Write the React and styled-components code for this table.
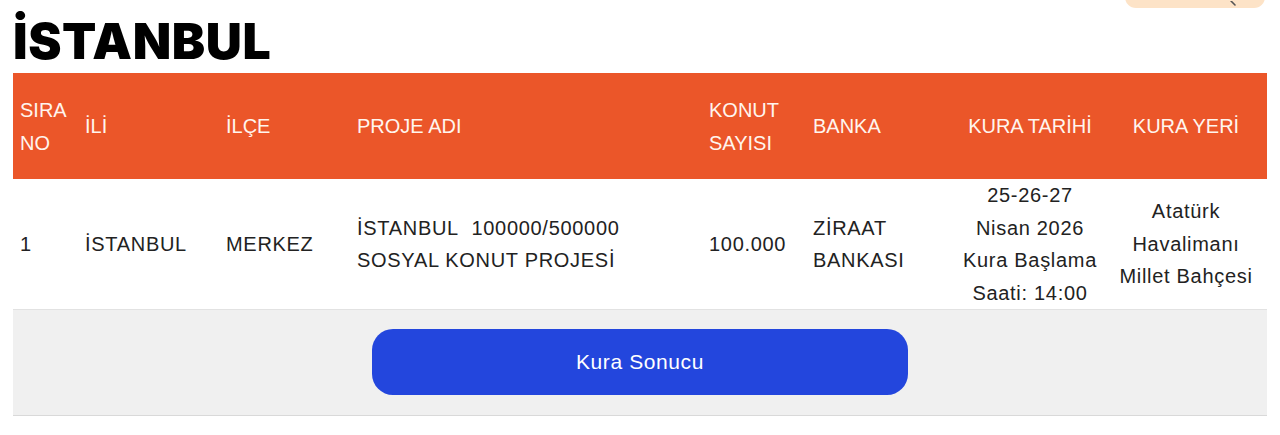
import React from 'react';
import styled, { createGlobalStyle } from 'styled-components';

const GlobalStyle = createGlobalStyle`
  html, body {
    margin: 0;
    padding: 0;
    background: #ffffff;
  }
  body {
    font-family: "Liberation Sans", Arial, sans-serif;
    color: #222222;
  }
`;

const COLUMNS = [
  { key: 'no', title: ['SIRA', 'NO'], width: 65 },
  { key: 'il', title: ['İLİ'], width: 141 },
  { key: 'ilce', title: ['İLÇE'], width: 131 },
  { key: 'proje', title: ['PROJE ADI'], width: 352 },
  { key: 'konut', title: ['KONUT', 'SAYISI'], width: 104 },
  { key: 'banka', title: ['BANKA'], width: 149 },
  { key: 'tarih', title: ['KURA TARİHİ'], width: 150, centered: true },
  { key: 'yer', title: ['KURA YERİ'], width: 162, centered: true },
];

const ROWS = [
  {
    no: ['1'],
    il: ['İSTANBUL'],
    ilce: ['MERKEZ'],
    proje: ['İSTANBUL\u00a0\u00a0100000/500000', 'SOSYAL KONUT PROJESİ'],
    konut: ['100.000'],
    banka: ['ZİRAAT', 'BANKASI'],
    tarih: ['25-26-27', 'Nisan 2026', 'Kura Başlama', 'Saati: 14:00'],
    yer: ['Atatürk', 'Havalimanı', 'Millet Bahçesi'],
  },
];

const Page = styled.div`
  position: relative;
  padding: 11px 13px 0 13px;
`;

const TopPill = styled.div`
  position: absolute;
  top: -14px;
  right: 15px;
  width: 140px;
  height: 22px;
  border-radius: 14px;
  background: #fde3c7;
  display: flex;
  justify-content: flex-end;
  align-items: flex-end;
  padding: 0 26px 1px 0;
  box-sizing: border-box;
`;

const Title = styled.h1`
  margin: 0 0 2px 0;
  font-family: Inter, "Liberation Sans", sans-serif;
  font-weight: 900;
  font-size: 50px;
  line-height: 60px;
  letter-spacing: 0.6px;
  color: #000000;
`;

const Table = styled.table`
  width: 1254px;
  border-collapse: collapse;
  table-layout: fixed;
`;

const HeadRow = styled.tr`
  background: #eb5629;
`;

const HeadCell = styled.th`
  padding: 21px 7px 20px 7px;
  font-weight: 400;
  font-size: 20px;
  line-height: 32.5px;
  color: #fff5ee;
  text-align: ${(props) => (props.centered ? 'center' : 'left')};
  vertical-align: middle;
`;

const BodyRow = styled.tr`
  background: #ffffff;
`;

const BodyCell = styled.td`
  padding: 0 7px;
  height: 129px;
  font-size: 20px;
  line-height: 32.5px;
  letter-spacing: 0.7px;
  color: #222222;
  text-align: ${(props) => (props.centered ? 'center' : 'left')};
  vertical-align: middle;
  white-space: nowrap;
`;

const ActionRow = styled.tr`
  background: #f0f0f0;
  border-top: 1px solid #e2e2e2;
  border-bottom: 1px solid #d9d9d9;
`;

const ActionCell = styled.td`
  padding: 19px 0 20px 0;
  text-align: center;
`;

const ResultButton = styled.button`
  width: 536px;
  height: 66px;
  border: none;
  border-radius: 21px;
  background: #2346dd;
  color: #ffffff;
  font-family: "Liberation Sans", Arial, sans-serif;
  font-size: 21px;
  letter-spacing: 0.6px;
  cursor: pointer;
`;

const Line = styled.span`
  display: block;
`;

const Lines = ({ lines }) => lines.map((text, i) => <Line key={i}>{text}</Line>);

const App = () => (
  <Page>
    <GlobalStyle />
    <TopPill>
      <svg width="10" height="6" viewBox="0 0 10 6">
        <path d="M2 0 L6 4" stroke="#555" strokeWidth="1.6" strokeLinecap="round" />
      </svg>
    </TopPill>
    <Title>İSTANBUL</Title>
    <Table>
      <colgroup>
        {COLUMNS.map((col) => (
          <col key={col.key} style={{ width: col.width }} />
        ))}
      </colgroup>
      <thead>
        <HeadRow>
          {COLUMNS.map((col) => (
            <HeadCell key={col.key} centered={col.centered}>
              <Lines lines={col.title} />
            </HeadCell>
          ))}
        </HeadRow>
      </thead>
      <tbody>
        {ROWS.map((row, index) => (
          <React.Fragment key={index}>
            <BodyRow>
              {COLUMNS.map((col) => (
                <BodyCell key={col.key} centered={col.centered}>
                  <Lines lines={row[col.key]} />
                </BodyCell>
              ))}
            </BodyRow>
            <ActionRow>
              <ActionCell colSpan={COLUMNS.length}>
                <ResultButton>Kura Sonucu</ResultButton>
              </ActionCell>
            </ActionRow>
          </React.Fragment>
        ))}
      </tbody>
    </Table>
  </Page>
);

export default App;
